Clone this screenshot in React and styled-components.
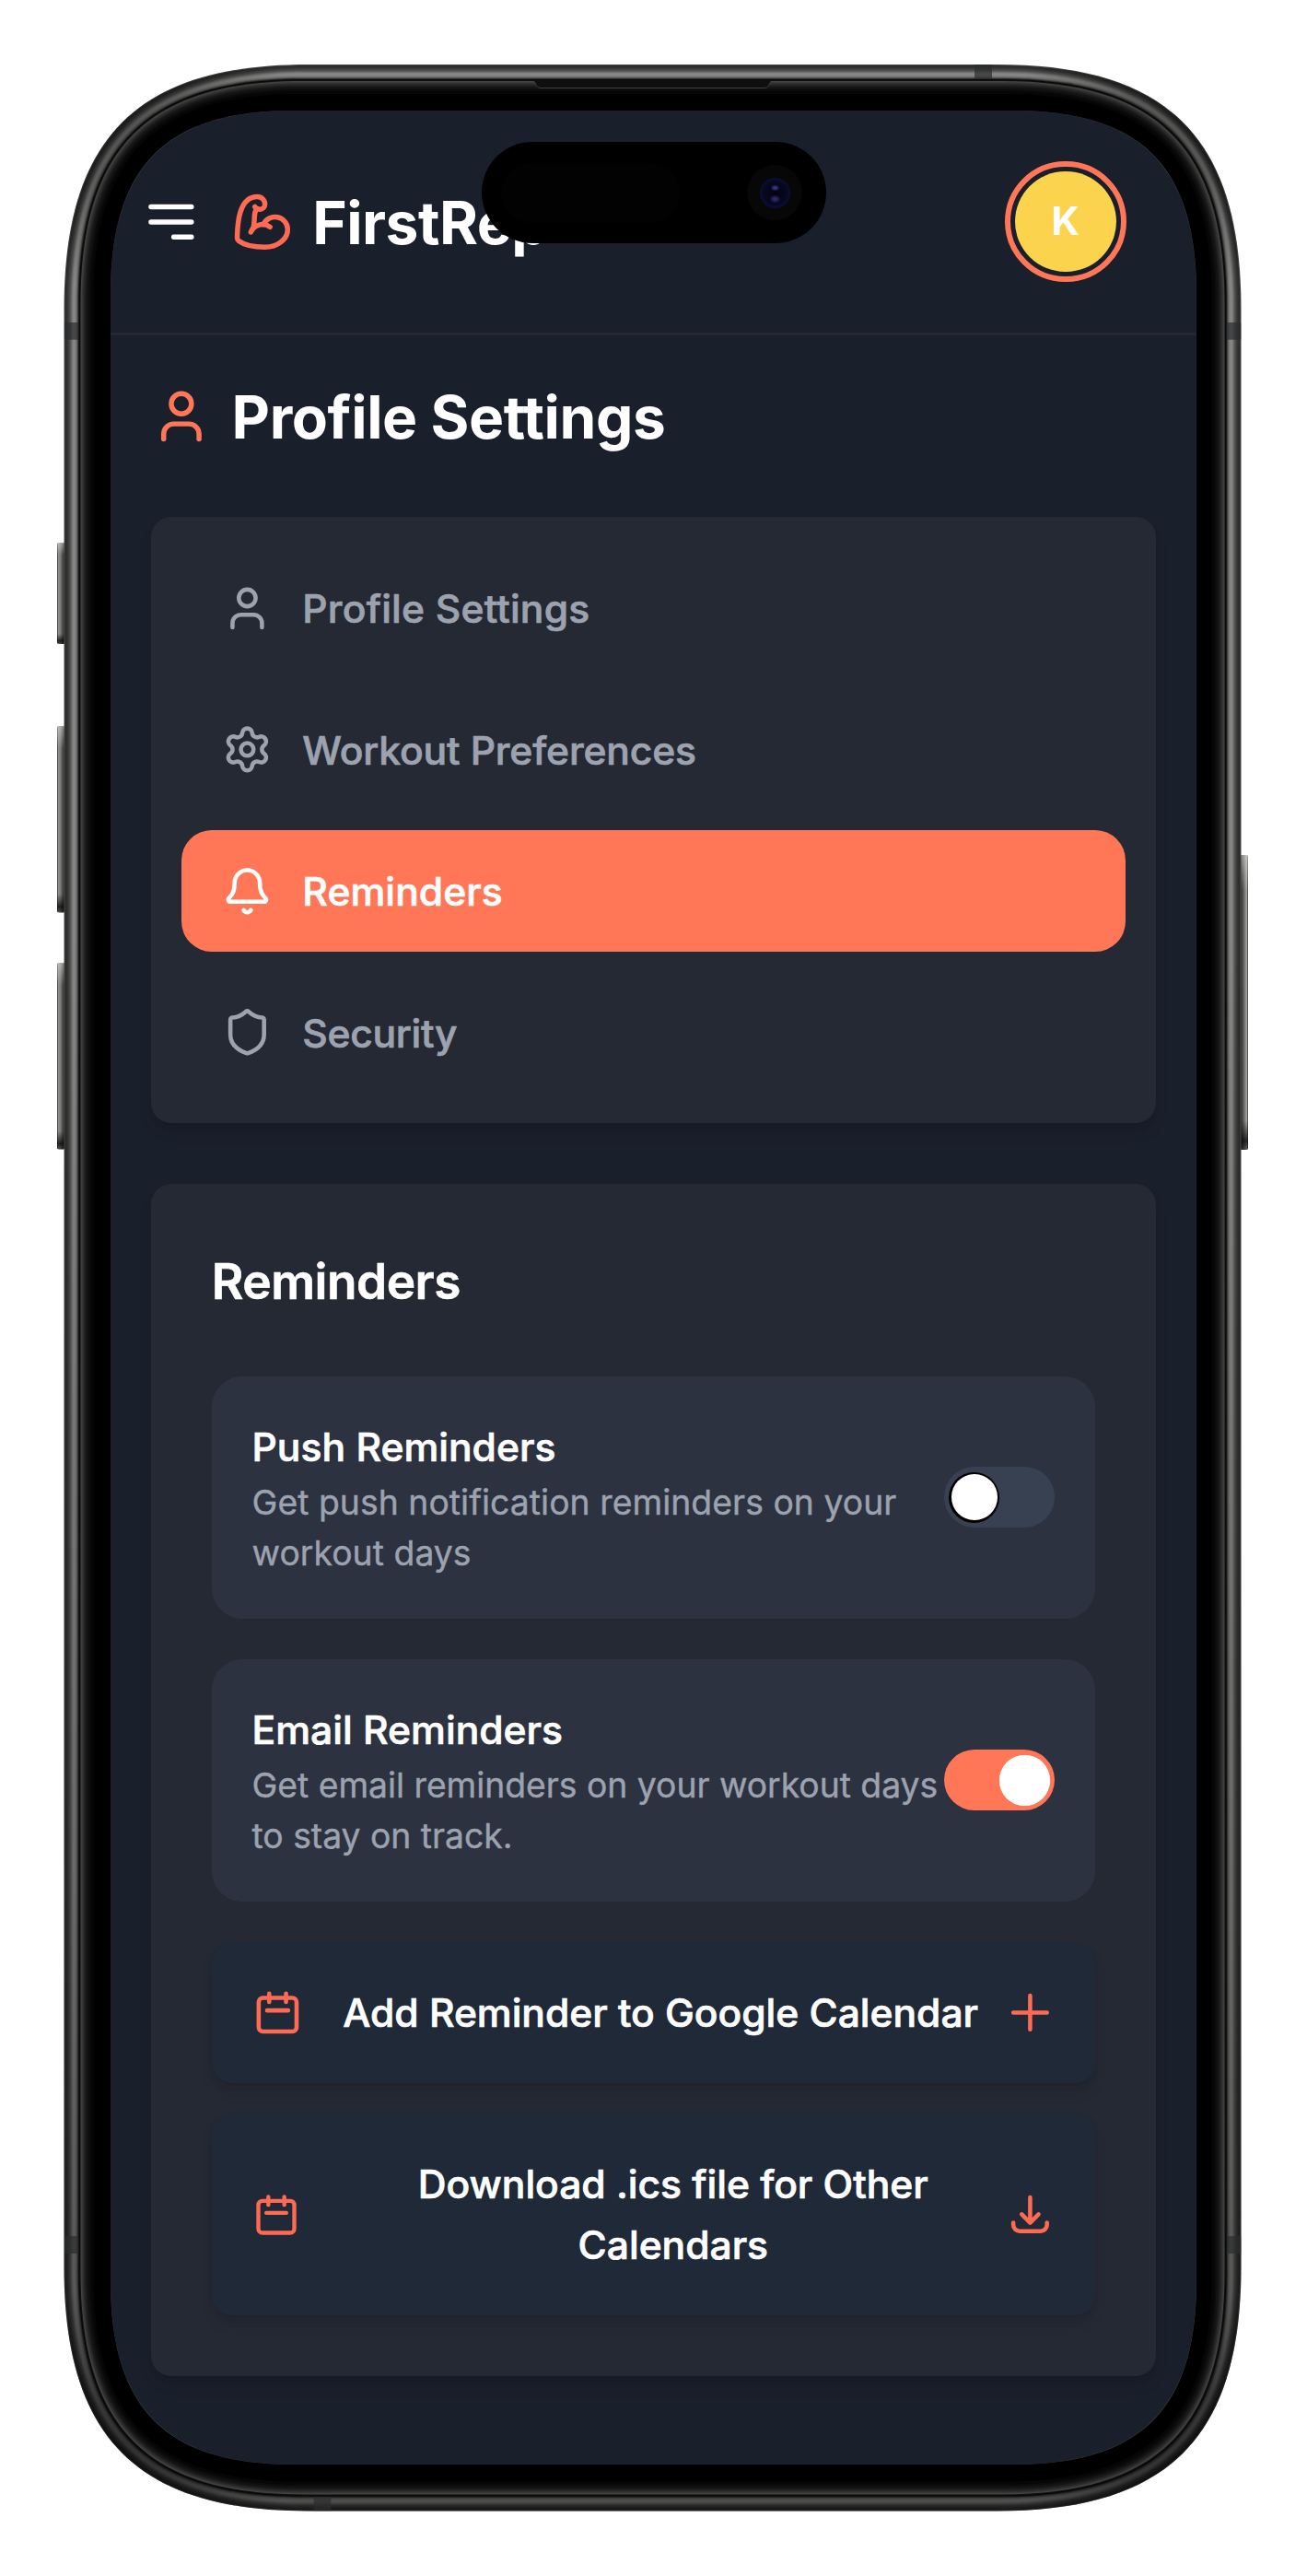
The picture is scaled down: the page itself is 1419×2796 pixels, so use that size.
import React, { useState } from "react";
import styled, { createGlobalStyle } from "styled-components";
import { BicepsFlexed, User, Settings, Bell, Shield } from "lucide-react";

/* The app is laid out for a 430px wide viewport, shown at 1179 device pixels. */
const UNIT = 1179 / 430;
const u = (n) => `${(n * UNIT).toFixed(2)}px`;

const colors = {
  page: "#1a1f2c",
  card: "#252934",
  inset: "#2d3240",
  action: "#202937",
  line: "#232834",
  accent: "#ff7757",
  accentStrong: "#ff6b52",
  muted: "#9ca3af",
  track: "#374151",
  avatar: "#fcd34d",
};

/* Rectangle with continuous (squircle-like) corners. */
const squircle = (x, y, w, h, a, b) =>
  `M${x} ${y + a}C${x} ${y + b} ${x + b} ${y} ${x + a} ${y}` +
  `H${x + w - a}C${x + w - b} ${y} ${x + w} ${y + b} ${x + w} ${y + a}` +
  `V${y + h - a}C${x + w} ${y + h - b} ${x + w - b} ${y + h} ${x + w - a} ${y + h}` +
  `H${x + a}C${x + b} ${y + h} ${x} ${y + h - b} ${x} ${y + h - a}Z`;

const Global = createGlobalStyle`
  *, *::before, *::after { box-sizing: border-box; }
  body {
    margin: 0;
    background: #fff;
    font-family: Inter, "Liberation Sans", sans-serif;
    color: #fff;
    -webkit-font-smoothing: antialiased;
  }
  button { font: inherit; color: inherit; border: 0; background: none; padding: 0; margin: 0; }
  h1, h2, h3, p { margin: 0; font-weight: inherit; }
  svg { display: block; flex-shrink: 0; }
`;

const Stage = styled.div`
  position: relative;
  width: 1419px;
  height: 2796px;
  padding: 120px;
  overflow: hidden;
`;

const FrameArt = styled.svg`
  position: absolute;
  inset: 0;
`;

const Screen = styled.div`
  position: relative;
  width: 1179px;
  height: 2555px;
  background: ${colors.page};
  clip-path: path("${squircle(0, 0, 1179, 2555, 200, 61)}");
`;

const Island = styled.div`
  position: absolute;
  left: 402.5px;
  top: 34px;
  width: 374px;
  height: 110px;
  border-radius: 55px;
  background: #000;
  display: flex;
  align-items: center;
  justify-content: space-between;
  padding: 0 25.5px 0 21px;
`;

const Sensor = styled.div`
  width: 194px;
  height: 65px;
  border-radius: 33px;
  background: #020202;
`;

const Camera = styled.div`
  width: 60px;
  height: 60px;
  border-radius: 50%;
  background: #070707;
  display: grid;
  place-items: center;
`;

const Lens = styled.div`
  width: 33px;
  height: 33px;
  border-radius: 50%;
  background:
    radial-gradient(ellipse 5px 3.5px at 50% 33%, #4a3f8c 0%, #2a2468 50%, transparent 100%),
    radial-gradient(ellipse 6px 4.5px at 50% 70%, #35307a 0%, #1d2058 50%, transparent 100%),
    radial-gradient(circle, #04040f 0%, #070720 52%, #0b0f3a 72%, #10142c 100%);
`;

const Header = styled.header`
  display: flex;
  align-items: center;
  height: ${u(89)};
  padding: 0 76.3px 0 ${u(12)};
  border-bottom: 3px solid ${colors.line};
`;

const MenuButton = styled.button`
  margin-right: ${u(12)};
`;

const Brand = styled.div`
  display: flex;
  align-items: center;
  gap: ${u(8)};
  flex: 1;
  font-size: 64px;
  font-weight: 700;
  line-height: ${u(32)};
`;

const Avatar = styled.div`
  width: ${u(48)};
  height: ${u(48)};
  border-radius: 50%;
  border: 6px solid ${colors.accent};
  padding: 5px;
`;

const AvatarFace = styled.div`
  width: 100%;
  height: 100%;
  border-radius: 50%;
  background: ${colors.avatar};
  display: grid;
  place-items: center;
  font-size: 42.6px;
  font-weight: 700;
  line-height: 1;
`;

const Main = styled.main`
  display: flex;
  flex-direction: column;
  gap: ${u(24)};
  padding: ${u(16)};
`;

const PageTitle = styled.h1`
  display: flex;
  align-items: center;
  gap: ${u(8)};
  height: ${u(32)};
  font-size: 64px;
  font-weight: 700;
  line-height: ${u(32)};
`;

/* Nudges capitals onto the optical centre of their row. */
const Label = styled.span`
  padding-top: ${(p) => p.$drop || 2}px;
  letter-spacing: ${(p) => p.$tracking || 0}px;
`;

const Card = styled.section`
  border-radius: ${u(8)};
  background: ${colors.card};
  padding: ${(p) => u(p.$pad)};
  box-shadow: 0 ${u(4)} ${u(6)} -${u(1)} rgba(0, 0, 0, 0.1), 0 ${u(2)} ${u(4)} -${u(2)} rgba(0, 0, 0, 0.1);
`;

const NavList = styled(Card).attrs({ as: "nav" })`
  display: flex;
  flex-direction: column;
  gap: ${u(8)};
`;

const NavItem = styled.button`
  display: flex;
  align-items: center;
  gap: ${u(12)};
  height: ${u(48)};
  padding: 0 ${u(16)};
  border-radius: ${u(12)};
  font-size: 42.6px;
  font-weight: 500;
  -webkit-text-stroke: 0.7px currentColor;
  line-height: ${u(24)};
  color: ${(p) => (p.$active ? "#fff" : colors.muted)};
  background: ${(p) => (p.$active ? colors.accent : "transparent")};
`;

const SectionTitle = styled.h2`
  height: ${u(28)};
  margin-bottom: ${u(24)};
  padding-top: 2px;
  font-size: 53.2px;
  font-weight: 600;
  -webkit-text-stroke: 0.6px currentColor;
  line-height: ${u(28)};
  letter-spacing: -0.5px;
`;

const Stack = styled.div`
  display: flex;
  flex-direction: column;
  gap: ${(p) => u(p.$gap)};
`;

const SettingRow = styled.div`
  display: flex;
  align-items: center;
  justify-content: space-between;
  height: ${u(96)};
  padding: ${u(16)};
  border-radius: ${u(12)};
  background: ${colors.inset};
`;

const SettingName = styled.h3`
  position: relative;
  top: 1px;
  font-size: 42.6px;
  font-weight: 500;
  -webkit-text-stroke: 0.7px currentColor;
  line-height: ${u(24)};
  letter-spacing: 0;
`;

const SettingHint = styled.p`
  position: relative;
  top: 1px;
  font-size: 37.3px;
  -webkit-text-stroke: 0.4px currentColor;
  line-height: ${u(20)};
  letter-spacing: ${(p) => p.$tracking || 0}px;
  color: ${colors.muted};
`;

const Toggle = styled.button`
  flex-shrink: 0;
  display: flex;
  align-items: center;
  justify-content: ${(p) => (p.$on ? "flex-end" : "flex-start")};
  width: ${u(44)};
  height: ${u(24)};
  padding: ${u(2)};
  border-radius: ${u(12)};
  background: ${(p) => (p.$on ? colors.accent : colors.track)};
`;

const Knob = styled.span`
  width: ${u(20)};
  height: ${u(20)};
  border-radius: 50%;
  background: ${(p) => (p.$on ? "#fff" : "#000")};
  padding: ${(p) => (p.$on ? "0" : "2.6px")};

  &::before {
    content: "";
    display: block;
    width: 100%;
    height: 100%;
    border-radius: 50%;
    background: #fff;
  }
`;

const ActionButton = styled.button`
  display: flex;
  align-items: center;
  padding: ${u(16)};
  border-radius: ${u(8)};
  background: ${colors.action};
  color: #fff;
  font-size: 42.6px;
  font-weight: 500;
  line-height: ${u(24)};
  letter-spacing: -0.04px;
  box-shadow: 0 ${u(4)} ${u(6)} -${u(1)} rgba(0, 0, 0, 0.1), 0 ${u(2)} ${u(4)} -${u(2)} rgba(0, 0, 0, 0.1);
`;

const ActionLabel = styled.span`
  flex: 1;
  padding-left: ${(p) => p.$indent}px;
  text-align: center;
  -webkit-text-stroke: 0.7px currentColor;
`;

const StrokeIcon = ({ d, size, color = colors.accentStrong }) => (
  <svg
    width={size}
    height={size}
    viewBox="0 0 24 24"
    fill="none"
    stroke={color}
    strokeWidth="2"
    strokeLinecap="round"
    strokeLinejoin="round"
  >
    <path d={d} />
  </svg>
);

const paths = {
  menu: "M4 6h16M4 12h16m-7 6h7",
  calendar: "M8 7V3m8 4V3m-9 8h10M5 21h14a2 2 0 002-2V7a2 2 0 00-2-2H5a2 2 0 00-2 2v12a2 2 0 002 2z",
  plus: "M12 4v16m8-8H4",
  download: "M4 16v1a3 3 0 003 3h10a3 3 0 003-3v-1m-4-4l-4 4m0 0l-4-4m4 4V4",
};

const metal = [
  [0, "#484a48"], [1, "#2b2c2b"], [2, "#2d2e2d"], [3, "#323332"], [4, "#3a3b3a"], [5, "#434443"],
  [6, "#4e4e4d"], [7, "#5e5d5c"], [8, "#71706e"], [9, "#807f7d"], [10, "#888785"], [11, "#888785"],
  [12, "#7f7e7d"], [13, "#70706f"], [14, "#525251"], [15, "#2c2c2c"],
];
const bezel = [
  [16, "#080808"], [17, "#101010"], [18, "#444444"], [19, "#3a3a3a"], [20, "#323232"], [21, "#2a2a2a"],
  [22, "#232323"], [23, "#1d1d1d"], [24, "#171717"], [25, "#121212"], [27, "#0b0b0b"], [29, "#060606"],
  [32, "#000000"],
];
const ring = (d) =>
  squircle(69.5 + d, 70 + d, 1278 - 2 * d, 2655.5 - 2 * d, 265 - d * 1.3, 79.7 - d * 0.374);

const bands = [
  [70, 350, 15.5, 18.7], [1332, 350, 15.5, 18.7], [1058, 70, 19, 15.5],
  [70, 2427, 15.5, 19], [1332, 2427, 15.5, 19], [340.7, 2710, 18.6, 15.5],
];
const sideKeys = [
  [62, 589, 110, "keyL"], [62, 788, 202.5, "keyL"], [62, 1045, 202.5, "keyL"], [1346.5, 928, 320, "keyR"],
];
const corners = [[120, 120], [1298, 120], [120, 2675], [1298, 2675]];

const PhoneFrame = () => (
  <FrameArt width="1419" height="2796" viewBox="0 0 1419 2796">
    <defs>
      <linearGradient id="keyL">
        <stop offset="0" stopColor="#2e2e2e" />
        <stop offset=".18" stopColor="#8e8e8c" />
        <stop offset=".45" stopColor="#7a7a78" />
        <stop offset=".7" stopColor="#4a4a49" />
        <stop offset="1" stopColor="#2c2c2c" />
      </linearGradient>
      <linearGradient id="keyR">
        <stop offset="0" stopColor="#2c2c2c" />
        <stop offset=".3" stopColor="#4a4a49" />
        <stop offset=".6" stopColor="#7c7c7a" />
        <stop offset=".82" stopColor="#a4a4a2" />
        <stop offset="1" stopColor="#2e2e2e" />
      </linearGradient>
      <linearGradient id="keyEnd" x1="0" y1="0" x2="0" y2="1">
        <stop offset="0" stopColor="#fff" stopOpacity=".4" />
        <stop offset=".12" stopColor="#fff" stopOpacity="0" />
        <stop offset=".9" stopColor="#000" stopOpacity="0" />
        <stop offset=".97" stopColor="#000" stopOpacity=".75" />
        <stop offset="1" stopColor="#000" stopOpacity=".4" />
      </linearGradient>
      <linearGradient id="shade" x1="0" y1="0" x2="0" y2="1">
        <stop offset="0" stopColor="#000" stopOpacity="0" />
        <stop offset=".35" stopColor="#000" stopOpacity="0" />
        <stop offset=".75" stopColor="#000" stopOpacity=".22" />
        <stop offset="1" stopColor="#000" stopOpacity=".42" />
      </linearGradient>
      <radialGradient id="corner">
        <stop offset="0" stopColor="#000" stopOpacity=".4" />
        <stop offset=".4" stopColor="#000" stopOpacity=".32" />
        <stop offset="1" stopColor="#000" stopOpacity="0" />
      </radialGradient>
      <clipPath id="body">
        <path d={ring(0)} />
      </clipPath>
    </defs>
    {sideKeys.map(([x, y, h, fill]) => (
      <g key={y + fill}>
        <rect x={x} y={y} width="8.5" height={h} rx="2" fill={`url(#${fill})`} />
        <rect x={x} y={y} width="8.5" height={h} rx="2" fill="url(#keyEnd)" />
      </g>
    ))}
    {metal.map(([d, fill]) => (
      <path key={d} d={ring(d)} fill={fill} />
    ))}
    <path d={ring(0)} fill="url(#shade)" />
    <g clipPath="url(#body)">
      {corners.map(([x, y]) => (
        <circle key={`${x}-${y}`} cx={x} cy={y} r="190" fill="url(#corner)" />
      ))}
      {bands.map(([x, y, w, h]) => (
        <rect key={`${x}-${y}`} x={x} y={y} width={w} height={h} fill="#2b2c2d" opacity=".7" />
      ))}
    </g>
    {bezel.map(([d, fill]) => (
      <path key={d} d={ring(d)} fill={fill} />
    ))}
    <path d="M579 87.5C582 88 581.500 95.500 587 95.500H830C835.500 95.500 835 88 838 87.500Z" fill="#0f0f0f" />
    <path d="M579 88.500C582 89 581.500 95.500 587 95.500H830C835.500 95.500 835 89 838 88.500" fill="none" stroke="#3d3d3d" />
    <path d={squircle(120, 120, 1179, 2555, 199, 60)} fill="#3a3a3a" />
  </FrameArt>
);

const navItems = [
  { label: "Profile Settings", Icon: User, tracking: 0.2 },
  { label: "Workout Preferences", Icon: Settings, tracking: -0.15 },
  { label: "Reminders", Icon: Bell, tracking: 0.05 },
  { label: "Security", Icon: Shield, tracking: -0.3 },
];

export default function App() {
  const [active, setActive] = useState("Reminders");
  const [push, setPush] = useState(false);
  const [email, setEmail] = useState(true);
  const small = 20 * UNIT;
  const large = 24 * UNIT;

  return (
    <>
      <Global />
      <Stage>
        <PhoneFrame />
        <Screen>
          <Header>
            <MenuButton aria-label="Menu">
              <StrokeIcon d={paths.menu} size={large} color="#fff" />
            </MenuButton>
            <Brand>
              <BicepsFlexed size={large} color={colors.accentStrong} />
              <Label $tracking={-0.55}>FirstRep</Label>
            </Brand>
            <Avatar>
              <AvatarFace>K</AvatarFace>
            </Avatar>
          </Header>

          <Main>
            <PageTitle>
              <User size={large} color={colors.accent} />
              <Label $drop={3} $tracking={-0.4}>Profile Settings</Label>
            </PageTitle>

            <NavList $pad={12}>
              {navItems.map(({ label, Icon, tracking }) => (
                <NavItem key={label} $active={label === active} onClick={() => setActive(label)}>
                  <Icon size={small} />
                  <Label $tracking={tracking}>{label}</Label>
                </NavItem>
              ))}
            </NavList>

            <Card $pad={24}>
              <SectionTitle>Reminders</SectionTitle>
              <Stack $gap={16}>
                <SettingRow>
                  <div>
                    <SettingName>Push Reminders</SettingName>
                    <SettingHint $tracking={0.05}>Get push notification reminders on your workout days</SettingHint>
                  </div>
                  <Toggle $on={push} aria-label="Push Reminders" onClick={() => setPush(!push)}>
                    <Knob $on={push} />
                  </Toggle>
                </SettingRow>
                <SettingRow>
                  <div>
                    <SettingName>Email Reminders</SettingName>
                    <SettingHint $tracking={-0.02}>Get email reminders on your workout days to stay on track.</SettingHint>
                  </div>
                  <Toggle $on={email} aria-label="Email Reminders" onClick={() => setEmail(!email)}>
                    <Knob $on={email} />
                  </Toggle>
                </SettingRow>
                <Stack $gap={12}>
                  <ActionButton>
                    <StrokeIcon d={paths.calendar} size={small} />
                    <ActionLabel $indent={15.2}>Add Reminder to Google Calendar</ActionLabel>
                    <StrokeIcon d={paths.plus} size={small} />
                  </ActionButton>
                  <ActionButton>
                    <StrokeIcon d={paths.calendar} size={52} />
                    <ActionLabel $indent={45.4}>Download .ics file for Other Calendars</ActionLabel>
                    <StrokeIcon d={paths.download} size={small} />
                  </ActionButton>
                </Stack>
              </Stack>
            </Card>
          </Main>

          <Island>
            <Sensor />
            <Camera>
              <Lens />
            </Camera>
          </Island>
        </Screen>
      </Stage>
    </>
  );
}
